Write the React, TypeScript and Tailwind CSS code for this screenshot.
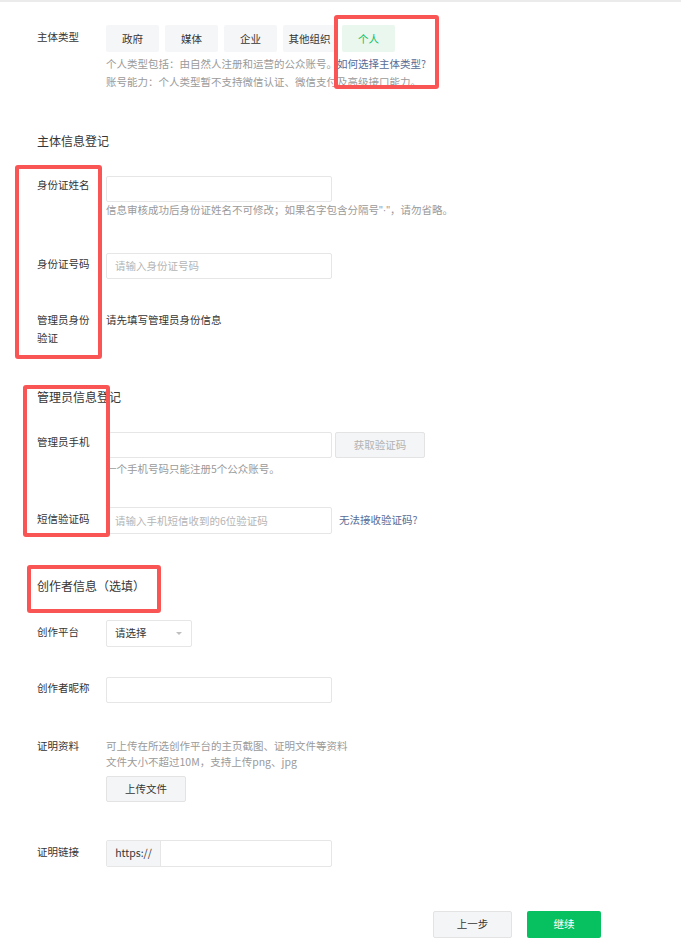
import React from "react";

const label = "w-[56px] shrink-0 mr-[13px] text-[10.5px] leading-[18px] text-[#353535]";
const input =
  "w-[226px] h-[26px] border border-[#e6e6e6] rounded-[2px] px-[8px] text-[10.5px] text-[#353535] placeholder:text-[#b5b5b5] outline-none bg-white";
const header = "ml-[37px] text-[12px] leading-[18px] text-[#353535]";
const desc = "text-[10.5px] text-[#9a9a9a]";

const types = ["政府", "媒体", "企业", "其他组织", "个人"];

function RedBox({ className }: { className: string }) {
  return <div className={`pointer-events-none absolute rounded-[3px] border-4 border-[#fa5555] ${className}`} />;
}

export default function App() {
  return (
    <div className="relative min-h-[947px] w-full overflow-hidden bg-white font-['Noto_Sans_CJK_SC','Microsoft_YaHei',sans-serif]">
      <div className="h-[2px] bg-[#ebebeb]" />

      {/* 主体类型 */}
      <div className="mt-[23px] flex items-start pl-[37px]">
        <div className={`${label} mt-[3px]`}>主体类型</div>
        <div>
          <div className="flex gap-[6px]">
            {types.map((t) => (
              <button
                key={t}
                className={`h-[27px] w-[53px] rounded-[2px] text-[10.5px] ${
                  t === "个人" ? "bg-[#e9f7ee] text-[#07c160]" : "bg-[#f5f6f7] text-[#353535]"
                }`}
              >
                {t}
              </button>
            ))}
          </div>
          <div className={`${desc} mt-[3px] leading-[18px]`}>
            <p>
              个人类型包括：由自然人注册和运营的公众账号。
              <span className="text-[#576b95]">如何选择主体类型?</span>
            </p>
            <p>账号能力：个人类型暂不支持微信认证、微信支付及高级接口能力。</p>
          </div>
        </div>
      </div>

      {/* 主体信息登记 */}
      <div className={`${header} mt-[41px]`}>主体信息登记</div>

      <div className="mt-[24px] flex items-start pl-[37px]">
        <div className={`${label} mt-[2px]`}>身份证姓名</div>
        <div>
          <input className={input} />
          <p className={`${desc} leading-[16px]`}>
            信息审核成功后身份证姓名不可修改；如果名字包含分隔号
            <span className="font-['Liberation_Sans',sans-serif]">"·"</span>，请勿省略。
          </p>
        </div>
      </div>

      <div className="mt-[35px] flex items-start pl-[37px]">
        <div className={`${label} mt-[2px]`}>身份证号码</div>
        <input className={input} placeholder="请输入身份证号码" />
      </div>

      <div className="mt-[32px] flex items-start pl-[37px]">
        <div className={label}>管理员身份验证</div>
        <div className="text-[10.5px] leading-[18px] text-[#353535]">请先填写管理员身份信息</div>
      </div>

      {/* 管理员信息登记 */}
      <div className={`${header} mt-[41px]`}>管理员信息登记</div>

      <div className="mt-[26px] flex items-start pl-[37px]">
        <div className={`${label} mt-[1px]`}>管理员手机</div>
        <div>
          <div className="flex gap-[3px]">
            <input className={input} />
            <button className="h-[26px] w-[90px] rounded-[2px] border border-[#e3e3e3] bg-[#f4f5f7] text-[10.5px] text-[#b2b2b2]">
              获取验证码
            </button>
          </div>
          <p className={`${desc} mt-[2px] leading-[18px]`}>一个手机号码只能注册5个公众账号。</p>
        </div>
      </div>

      <div className="mt-[29px] flex items-start pl-[37px]">
        <div className={`${label} mt-[3px]`}>短信验证码</div>
        <div className="flex items-center">
          <input className={`${input} h-[27px]`} placeholder="请输入手机短信收到的6位验证码" />
          <span className="ml-[7px] text-[10.5px] text-[#576b95]">无法接收验证码?</span>
        </div>
      </div>

      {/* 创作者信息 */}
      <div className={`${header} mt-[43px]`}>创作者信息（选填）</div>

      <div className="mt-[25px] flex items-start pl-[37px]">
        <div className={`${label} mt-[3px]`}>创作平台</div>
        <div className="flex h-[27px] w-[86px] items-center justify-between rounded-[2px] border border-[#e6e6e6] pl-[8px] pr-[9px] text-[10.5px] text-[#353535]">
          <span>请选择</span>
          <span className="h-0 w-0 border-x-[3px] border-t-[3px] border-x-transparent border-t-[#bfbfbf]" />
        </div>
      </div>

      <div className="mt-[30px] flex items-start pl-[37px]">
        <div className={`${label} mt-[2px]`}>创作者昵称</div>
        <input className={input} />
      </div>

      <div className="mt-[34px] flex items-start pl-[37px]">
        <div className={label}>证明资料</div>
        <div>
          <div className={`${desc} mt-[1px] leading-[16px]`}>
            <p>可上传在所选创作平台的主页截图、证明文件等资料</p>
            <p>文件大小不超过10M，支持上传png、jpg</p>
          </div>
          <button className="mt-[6px] h-[26px] w-[80px] rounded-[2px] border border-[#e3e3e3] bg-[#f4f5f7] text-[10.5px] text-[#353535]">
            上传文件
          </button>
        </div>
      </div>

      <div className="mt-[38px] flex items-start pl-[37px]">
        <div className={`${label} mt-[3px]`}>证明链接</div>
        <div className="flex h-[27px] w-[226px] overflow-hidden rounded-[2px] border border-[#e6e6e6]">
          <span className="flex w-[54px] items-center justify-center border-r border-[#e6e6e6] bg-[#f4f5f7] text-[10.5px] text-[#353535]">
            https://
          </span>
          <input className="min-w-0 flex-1 px-[8px] text-[10.5px] outline-none" />
        </div>
      </div>

      <div className="mt-[44px] flex justify-end gap-[15px] pr-[80px]">
        <button className="h-[27px] w-[79px] rounded-[2px] border border-[#e3e3e3] bg-[#f4f5f7] text-[10.5px] text-[#353535]">
          上一步
        </button>
        <button className="h-[27px] w-[74px] rounded-[2px] bg-[#07c160] text-[10.5px] text-white">继续</button>
      </div>

      {/* annotation boxes */}
      <RedBox className="left-[334px] top-[15px] h-[74px] w-[105px]" />
      <RedBox className="left-[15px] top-[165px] h-[194px] w-[87px]" />
      <RedBox className="left-[23px] top-[385px] h-[152px] w-[87px]" />
      <RedBox className="left-[27px] top-[565px] h-[48px] w-[134px]" />
    </div>
  );
}
